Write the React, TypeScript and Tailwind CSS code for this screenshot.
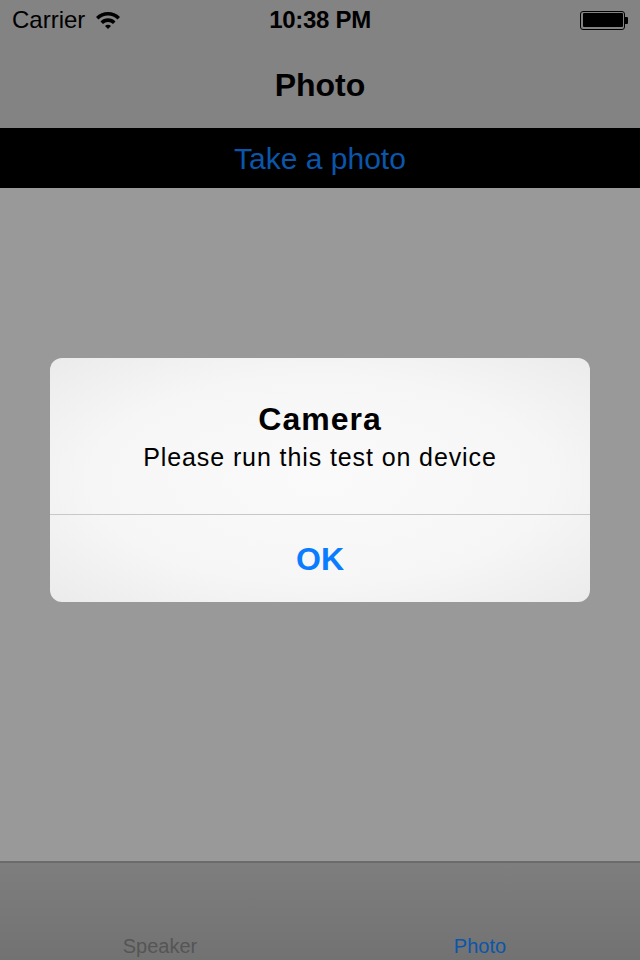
export default function App() {
  return (
    <div className="relative flex h-[960px] w-[640px] flex-col overflow-hidden bg-[#999999] font-['Liberation_Sans',Arial,sans-serif]">
      {/* status + nav bar */}
      <div className="flex h-[128px] flex-col bg-[#838383]">
        <div className="flex h-[40px] items-center px-[12px] text-[24px] text-black">
          <div className="flex w-[200px] items-center gap-[10px]">
            <span>Carrier</span>
            <svg width="26" height="20" viewBox="0 0 26 20">
              <path d="M1 7 A17 17 0 0 1 25 7 L22.5 9.5 A13.5 13.5 0 0 0 3.5 9.5 Z" fill="#000" />
              <path d="M5.5 11.5 A10.5 10.5 0 0 1 20.5 11.5 L18 14 A7 7 0 0 0 8 14 Z" fill="#000" />
              <path d="M10 16 A4.2 4.2 0 0 1 16 16 L13 19 Z" fill="#000" />
            </svg>
          </div>
          <div className="flex-1 text-center font-bold tracking-[-0.3px]">10:38 PM</div>
          <div className="flex w-[200px] justify-end">
            <div className="flex items-center">
              <div className="h-[19px] w-[45px] rounded-[3px] border-[1.5px] border-black p-[1.5px]">
                <div className="h-full w-full rounded-[1px] bg-black" />
              </div>
              <div className="h-[7px] w-[3px] rounded-r-[1px] bg-black" />
            </div>
          </div>
        </div>
        <div className="flex flex-1 items-center justify-center pt-[2px] text-[32px] font-bold text-black">
          Photo
        </div>
      </div>

      {/* button bar */}
      <div className="flex h-[60px] items-center justify-center bg-black text-[30px] text-[#0a56aa]">
        Take a photo
      </div>

      <div className="flex-1" />

      {/* tab bar */}
      <div className="flex h-[99px] border-t-[2px] border-[#6b6b6b] bg-gradient-to-b from-[#7e7e7e] to-[#727272]">
        <div className="flex flex-1 items-end justify-center pb-[4px] text-[20px] leading-[20px] text-[#555555]">Speaker</div>
        <div className="flex flex-1 items-end justify-center pb-[4px] text-[20px] leading-[20px] text-[#0a56aa]">Photo</div>
      </div>

      {/* alert */}
      <div className="absolute left-[50px] top-[358px] flex w-[540px] flex-col overflow-hidden rounded-[12px] bg-[radial-gradient(ellipse_at_center,#fafafa_0%,#f6f6f6_60%,#ebebeb_100%)]">
        <div className="flex h-[156px] flex-col items-center pt-[42px] text-black">
          <div className="text-[32px] font-bold leading-[38px] tracking-[1px]">Camera</div>
          <div className="mt-[4px] text-[25px] leading-[30px] tracking-[0.9px]">Please run this test on device</div>
        </div>
        <div className="h-px bg-[#c8c8cc]" />
        <div className="flex h-[87px] items-center justify-center text-[32px] font-bold text-[#0a7cff]">OK</div>
      </div>
    </div>
  )
}
